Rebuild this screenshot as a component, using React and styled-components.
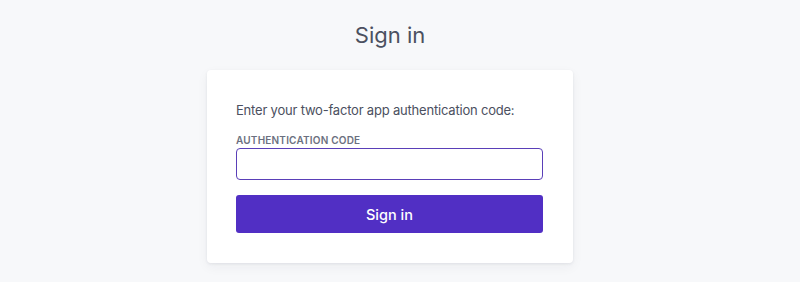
import React from 'react';
import styled, { createGlobalStyle } from 'styled-components';

const GlobalStyle = createGlobalStyle`
  html, body {
    margin: 0;
    padding: 0;
    background: #f7f8fa;
    font-family: Inter, "Noto Sans", sans-serif;
    -webkit-font-smoothing: antialiased;
  }
`;

const Page = styled.div`
  display: flex;
  flex-direction: column;
  align-items: center;
  padding: 19px 20px 0 0;
  min-height: 282px;
  box-sizing: border-box;
`;

const Title = styled.h1`
  margin: 0 0 19px;
  font-size: 22px;
  line-height: 32px;
  font-weight: 400;
  color: #4b5060;
`;

const Card = styled.form`
  width: 366px;
  box-sizing: border-box;
  padding: 30px 30px 30px 29px;
  background: #ffffff;
  border-radius: 4px;
  box-shadow: 0 1px 3px rgba(30, 40, 60, 0.08), 0 4px 12px rgba(30, 40, 60, 0.05);
  display: flex;
  flex-direction: column;
`;

const Intro = styled.p`
  margin: 0 0 13px;
  font-size: 13px;
  line-height: 20px;
  letter-spacing: -0.2px;
  color: #4b5060;
`;

const Label = styled.label`
  display: block;
  font-size: 10px;
  line-height: 14px;
  font-weight: 600;
  letter-spacing: 0.2px;
  text-transform: uppercase;
  color: #6b7080;
  margin-bottom: 1px;
`;

const Input = styled.input`
  display: block;
  width: 100%;
  height: 32px;
  box-sizing: border-box;
  border: 1px solid #5a3fb8;
  border-radius: 4px;
  outline: none;
  padding: 0 10px;
  font-family: inherit;
  font-size: 14px;
  background: #fff;
`;

const Submit = styled.button`
  margin-top: 15px;
  height: 38px;
  width: 100%;
  border: none;
  border-radius: 3px;
  background: #512fc4;
  color: #ffffff;
  font-family: inherit;
  font-size: 14.5px;
  font-weight: 500;
  cursor: pointer;
`;

export default function App() {
  return (
    <>
      <GlobalStyle />
      <Page>
        <Title>Sign in</Title>
        <Card onSubmit={e => e.preventDefault()}>
          <Intro>Enter your two-factor app authentication code:</Intro>
          <Label htmlFor="code">Authentication code</Label>
          <Input id="code" type="text" autoComplete="one-time-code" />
          <Submit type="submit">Sign in</Submit>
        </Card>
      </Page>
    </>
  );
}
